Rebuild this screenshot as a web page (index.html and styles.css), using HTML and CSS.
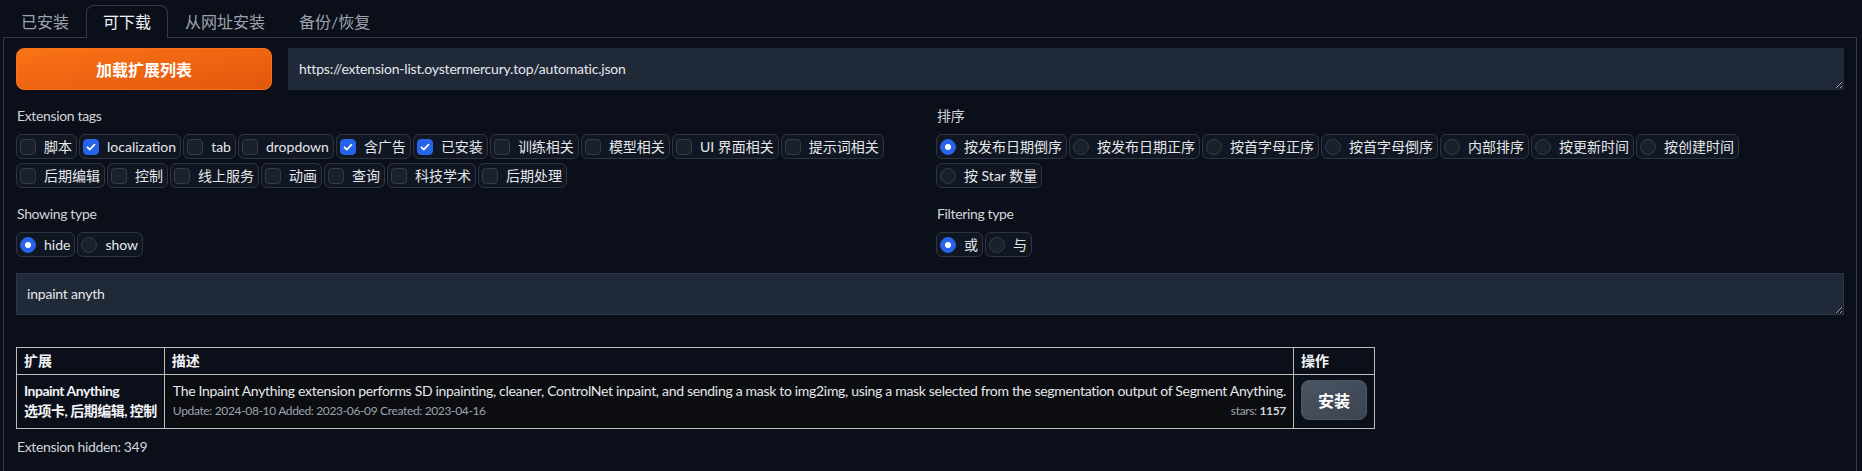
FILE: index.html
```html
<!DOCTYPE html>
<html lang="zh">
<head>
<meta charset="utf-8">
<title>Extensions</title>
<link rel="stylesheet" href="styles.css">
</head>
<body>
<div class="app">
  <div class="tab-nav">
    <button class="tab">已安装</button>
    <button class="tab active">可下载</button>
    <button class="tab">从网址安装</button>
    <button class="tab">备份/恢复</button>
  </div>
  <div class="panel">
    <div class="load-row">
      <button class="btn-primary">加载扩展列表</button>
      <textarea class="textbox url" rows="1">https://extension-list.oystermercury.top/automatic.json</textarea>
    </div>

    <div class="filters">
      <div class="field">
        <div class="label">Extension tags</div>
        <div class="options">
          <label class="opt"><span class="box"></span><span>脚本</span></label>
          <label class="opt"><span class="box on"><svg viewBox="0 0 16 16"><path d="M4 8.3l2.6 2.6L12 5.4"/></svg></span><span>localization</span></label>
          <label class="opt"><span class="box"></span><span>tab</span></label>
          <label class="opt"><span class="box"></span><span>dropdown</span></label>
          <label class="opt"><span class="box on"><svg viewBox="0 0 16 16"><path d="M4 8.3l2.6 2.6L12 5.4"/></svg></span><span>含广告</span></label>
          <label class="opt"><span class="box on"><svg viewBox="0 0 16 16"><path d="M4 8.3l2.6 2.6L12 5.4"/></svg></span><span>已安装</span></label>
          <label class="opt"><span class="box"></span><span>训练相关</span></label>
          <label class="opt"><span class="box"></span><span>模型相关</span></label>
          <label class="opt"><span class="box"></span><span>UI 界面相关</span></label>
          <label class="opt"><span class="box"></span><span>提示词相关</span></label>
          <label class="opt"><span class="box"></span><span>后期编辑</span></label>
          <label class="opt"><span class="box"></span><span>控制</span></label>
          <label class="opt"><span class="box"></span><span>线上服务</span></label>
          <label class="opt"><span class="box"></span><span>动画</span></label>
          <label class="opt"><span class="box"></span><span>查询</span></label>
          <label class="opt"><span class="box"></span><span>科技学术</span></label>
          <label class="opt"><span class="box"></span><span>后期处理</span></label>
        </div>
      </div>

      <div class="field">
        <div class="label">排序</div>
        <div class="options">
          <label class="opt"><span class="radio on"></span><span>按发布日期倒序</span></label>
          <label class="opt"><span class="radio"></span><span>按发布日期正序</span></label>
          <label class="opt"><span class="radio"></span><span>按首字母正序</span></label>
          <label class="opt"><span class="radio"></span><span>按首字母倒序</span></label>
          <label class="opt"><span class="radio"></span><span>内部排序</span></label>
          <label class="opt"><span class="radio"></span><span>按更新时间</span></label>
          <label class="opt"><span class="radio"></span><span>按创建时间</span></label>
          <label class="opt"><span class="radio"></span><span>按 Star 数量</span></label>
        </div>
      </div>

      <div class="field">
        <div class="label">Showing type</div>
        <div class="options">
          <label class="opt"><span class="radio on"></span><span>hide</span></label>
          <label class="opt"><span class="radio"></span><span>show</span></label>
        </div>
      </div>

      <div class="field">
        <div class="label">Filtering type</div>
        <div class="options">
          <label class="opt"><span class="radio on"></span><span>或</span></label>
          <label class="opt"><span class="radio"></span><span>与</span></label>
        </div>
      </div>
    </div>

    <textarea class="textbox search" rows="1">inpaint anyth</textarea>

    <table class="ext-table">
      <thead>
        <tr><th>扩展</th><th>描述</th><th>操作</th></tr>
      </thead>
      <tbody>
        <tr>
          <td class="name"><b>Inpaint Anything</b><br><b>选项卡, 后期编辑, 控制</b></td>
          <td class="desc">
            <div class="desc-text">The Inpaint Anything extension performs SD inpainting, cleaner, ControlNet inpaint, and sending a mask to img2img, using a mask selected from the segmentation output of Segment Anything.</div>
            <div class="meta"><span>Update: 2024-08-10 Added: 2023-06-09 Created: 2023-04-16</span><span>stars: <b>1157</b></span></div>
          </td>
          <td class="action"><button class="btn-secondary">安装</button></td>
        </tr>
      </tbody>
    </table>

    <div class="hidden-count">Extension hidden: 349</div>
  </div>
</div>
</body>
</html>
```
FILE: styles.css
```css
* { box-sizing: border-box; }

html, body {
  margin: 0;
  background: #0b0f19;
  color: #e5e7eb;
  font-family: "Lato", "Noto Sans CJK SC", sans-serif;
  font-size: 14px;
  line-height: 20px;
}

.app {
  padding: 0 5px 0 3px;
}

.tab-nav {
  display: flex;
  padding: 5px 0 0 1px;
}

.tab {
  font-family: inherit;
  font-size: 16px;
  line-height: 20px;
  height: 32px;
  padding: 0 16px;
  background: transparent;
  color: #9ca3af;
  border: 1px solid transparent;
  border-bottom: none;
  border-radius: 8px 8px 0 0;
  cursor: pointer;
}

.tab.active {
  color: #f3f4f6;
  border-color: #343a46;
  background: #0b0f19;
  margin-bottom: -1px;
  height: 33px;
  position: relative;
  z-index: 1;
}

.panel {
  border: 1px solid #343a46;
  border-bottom: none;
  padding: 10px 12px 30px 12px;
}

.load-row {
  display: flex;
  gap: 16px;
}

.btn-primary {
  width: 256px;
  height: 42px;
  flex: none;
  border: 1px solid #f97316;
  border-radius: 8px;
  background: linear-gradient(to bottom right, #f97316, #e2570d);
  color: #fff;
  font-family: inherit;
  font-size: 16px;
  font-weight: 700;
}

.textbox {
  display: block;
  width: 100%;
  background: #1f2937;
  color: #e5e7eb;
  font-family: inherit;
  font-size: 14px;
  line-height: 20px;
  letter-spacing: -0.2px;
  border: 1px solid #1f2937;
  border-radius: 0;
  padding: 10px 10px;
  resize: vertical;
  outline: none;
  overflow: hidden;
}

.url {
  height: 42px;
  flex: 1;
}

.search {
  margin-top: 16px;
  height: 42px;
  border-color: #2c3644;
}

.filters {
  margin-top: 16px;
  display: grid;
  grid-template-columns: 1fr 1fr;
  column-gap: 12px;
  row-gap: 16px;
}

.label {
  color: #d1d5db;
  margin-bottom: 8px;
  padding-left: 1px;
  letter-spacing: -0.35px;
}

.options {
  display: flex;
  flex-wrap: wrap;
  gap: 4px 2px;
}

.opt {
  display: flex;
  align-items: center;
  gap: 8px;
  height: 25px;
  padding: 0 4px 0 3px;
  border: 1px solid #2e3542;
  border-radius: 6px;
  background: #111722;
  color: #e5e7eb;
  white-space: nowrap;
}

.box, .radio {
  width: 16px;
  height: 16px;
  flex: none;
  background: #1a212d;
  border: 1px solid #343c49;
}

.box { border-radius: 4px; }

.box.on {
  background: #2563eb;
  border-color: #2563eb;
}

.box svg {
  display: block;
  width: 14px;
  height: 14px;
  fill: none;
  stroke: #fff;
  stroke-width: 2;
  stroke-linecap: round;
  stroke-linejoin: round;
}

.radio {
  border-radius: 50%;
  display: flex;
  align-items: center;
  justify-content: center;
}

.radio.on {
  background: #2563eb;
  border-color: #2563eb;
}

.radio.on::after {
  content: "";
  width: 6px;
  height: 6px;
  border-radius: 50%;
  background: #fff;
}

.ext-table {
  margin-top: 32px;
  border-collapse: collapse;
  border: 1px solid #bdbdbd;
}

.ext-table th,
.ext-table td {
  border: 1px solid #bdbdbd;
  text-align: left;
}

.ext-table th {
  padding: 3px 7px;
  font-weight: 700;
  color: #f3f4f6;
}

.ext-table td {
  padding: 6px 7px;
  vertical-align: top;
}

.ext-table td.name {
  letter-spacing: -0.5px;
}

.name b { color: #f3f4f6; }

.ext-table td.desc {
  background: #0c0d11;
  padding-left: 8px;
}

.desc-text {
  white-space: nowrap;
  color: #e5e7eb;
  letter-spacing: -0.31px;
}

.meta {
  display: flex;
  justify-content: space-between;
  font-size: 12px;
  color: #9ca3af;
  letter-spacing: -0.35px;
}

.meta b { color: #d1d5db; }

.ext-table td.action {
  vertical-align: middle;
  padding: 5px 7px 8px 7px;
}

.btn-secondary {
  width: 66px;
  height: 40px;
  border: 1px solid #4b5563;
  border-radius: 8px;
  background: linear-gradient(to bottom right, #4b5563, #3b4350);
  color: #fff;
  font-family: inherit;
  font-size: 16px;
  font-weight: 700;
}

.hidden-count {
  margin-top: 8px;
  color: #d1d5db;
  padding-left: 1px;
  letter-spacing: -0.35px;
}
```
